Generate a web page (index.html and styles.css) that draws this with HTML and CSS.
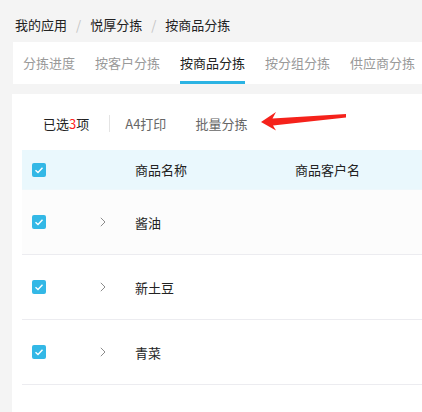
FILE: index.html
```html
<!DOCTYPE html>
<html lang="zh">
<head>
<meta charset="utf-8">
<link rel="stylesheet" href="styles.css">
</head>
<body>
<div class="main">
  <div class="crumbs">
    <span>我的应用</span><span class="sep">/</span><span>悦厚分拣</span><span class="sep">/</span><span>按商品分拣</span>
  </div>
  <div class="tabs">
    <div class="tab">分拣进度</div>
    <div class="tab">按客户分拣</div>
    <div class="tab active">按商品分拣</div>
    <div class="tab">按分组分拣</div>
    <div class="tab">供应商分拣</div>
  </div>
  <div class="card">
    <div class="toolbar">
      <span class="selected">已选<em>3</em>项</span>
      <span class="divider"></span>
      <span class="btn">A4打印</span>
      <span class="btn">批量分拣</span>
    </div>
    <svg class="arrow" width="88" height="20" viewBox="0 0 88 20">
      <polygon points="1,11 16,1 12.5,7.5 86,3 86,6.5 13,14.5 16,19.5" fill="#f5221b"/>
    </svg>
    <div class="table">
      <div class="row head">
        <div class="cell"><span class="cb"><svg width="14" height="14" viewBox="0 0 14 14"><path d="M3.5 7.2 L6 9.5 L10.5 4.8" fill="none" stroke="#fff" stroke-width="1.4"/></svg></span></div>
        <div class="cell"></div>
        <div class="cell">商品名称</div>
        <div class="cell">商品客户名</div>
      </div>
      <div class="row odd">
        <div class="cell"><span class="cb"><svg width="14" height="14" viewBox="0 0 14 14"><path d="M3.5 7.2 L6 9.5 L10.5 4.8" fill="none" stroke="#fff" stroke-width="1.4"/></svg></span></div>
        <div class="cell"><svg class="chev" width="6" height="10" viewBox="0 0 6 10"><path d="M0.8 0.8 L5 5 L0.8 9.2" fill="none" stroke="#8c8c8c" stroke-width="1"/></svg></div>
        <div class="cell">酱油</div>
        <div class="cell"></div>
      </div>
      <div class="row">
        <div class="cell"><span class="cb"><svg width="14" height="14" viewBox="0 0 14 14"><path d="M3.5 7.2 L6 9.5 L10.5 4.8" fill="none" stroke="#fff" stroke-width="1.4"/></svg></span></div>
        <div class="cell"><svg class="chev" width="6" height="10" viewBox="0 0 6 10"><path d="M0.8 0.8 L5 5 L0.8 9.2" fill="none" stroke="#8c8c8c" stroke-width="1"/></svg></div>
        <div class="cell">新土豆</div>
        <div class="cell"></div>
      </div>
      <div class="row">
        <div class="cell"><span class="cb"><svg width="14" height="14" viewBox="0 0 14 14"><path d="M3.5 7.2 L6 9.5 L10.5 4.8" fill="none" stroke="#fff" stroke-width="1.4"/></svg></span></div>
        <div class="cell"><svg class="chev" width="6" height="10" viewBox="0 0 6 10"><path d="M0.8 0.8 L5 5 L0.8 9.2" fill="none" stroke="#8c8c8c" stroke-width="1"/></svg></div>
        <div class="cell">青菜</div>
        <div class="cell"></div>
      </div>
    </div>
  </div>
</div>
</body>
</html>
```

FILE: styles.css
```css
* { box-sizing: border-box; }
html, body {
  margin: 0;
  padding: 0;
  height: 412px;
  overflow: hidden;
  background: #f4f4f4;
  font-family: "Noto Sans CJK SC", "Noto Sans", sans-serif;
  font-size: 13px;
  color: #333;
}
.main {
  margin-left: 12px;
}
.crumbs {
  height: 42px;
  padding-left: 3px;
  padding-top: 6px;
  display: flex;
  align-items: center;
  color: #222;
}
.crumbs .sep {
  color: #c4c4c4;
  margin: 0 9px;
}
.tabs {
  margin-left: 1px;
  height: 42px;
  background: #fff;
  display: flex;
  gap: 20px;
  padding-left: 10px;
}
.tab {
  height: 42px;
  padding-top: 2px;
  line-height: 37px;
  border-bottom: 3px solid transparent;
  color: #9a9a9a;
  white-space: nowrap;
}
.tab.active {
  color: #222;
  border-bottom-color: #2bb3e3;
}
.card {
  position: relative;
  margin-top: 10px;
  background: #fff;
  padding-left: 10px;
  height: 330px;
}
.toolbar {
  height: 56px;
  padding-top: 3px;
  padding-left: 21px;
  display: flex;
  align-items: center;
}
.selected { color: #222; }
.selected em { font-style: normal; color: #f22; }
.divider {
  width: 1px;
  height: 17px;
  background: #e4e4e4;
  margin-left: 20px;
}
.btn {
  padding: 0 15px;
  color: #666;
}
.btn:last-child { padding-left: 14px; }
.arrow {
  position: absolute;
  left: 248px;
  top: 17px;
}
.row {
  display: grid;
  grid-template-columns: 68px 45px 160px 1fr;
  height: 65px;
  border-bottom: 1px solid #ececf0;
  align-items: center;
  color: #222;
}
.row.head {
  height: 40px;
  background: #eaf8fd;
  border-bottom: 1px solid #eef8fc;
}
.row.odd { background: #fcfcfc; }
.cell { display: flex; align-items: center; }
.cell:first-child { padding-left: 10px; }
.cell:nth-child(2) { padding-left: 10px; }
.cb {
  width: 14px;
  height: 14px;
  border-radius: 2px;
  background: #33b8e6;
  display: block;
}
.cb svg { display: block; }
.chev { display: block; }
```
